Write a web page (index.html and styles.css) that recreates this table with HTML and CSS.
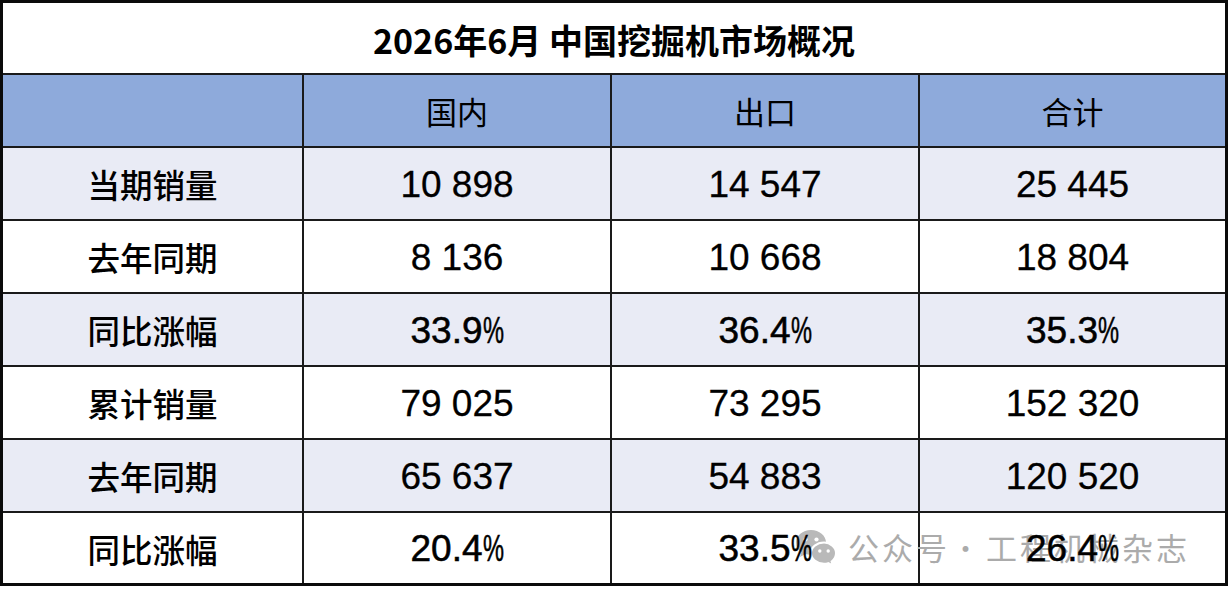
FILE: index.html
```html
<!DOCTYPE html>
<html lang="zh-CN">
<head>
<meta charset="utf-8">
<title>2026年6月 中国挖掘机市场概况</title>
<link rel="stylesheet" href="styles.css">
</head>
<body>
<div class="sheet">
  <div class="grid">
    <div class="cell title">2026年6月 中国挖掘机市场概况</div>

    <div class="cell head"></div>
    <div class="cell head">国内</div>
    <div class="cell head">出口</div>
    <div class="cell head">合计</div>

    <div class="cell label alt">当期销量</div>
    <div class="cell num alt"><span class="v">10 898</span></div>
    <div class="cell num alt"><span class="v">14 547</span></div>
    <div class="cell num alt"><span class="v">25 445</span></div>

    <div class="cell label">去年同期</div>
    <div class="cell num"><span class="v">8 136</span></div>
    <div class="cell num"><span class="v">10 668</span></div>
    <div class="cell num"><span class="v">18 804</span></div>

    <div class="cell label alt">同比涨幅</div>
    <div class="cell num alt"><span class="v p">33.9<span class="pct">%</span></span></div>
    <div class="cell num alt"><span class="v p">36.4<span class="pct">%</span></span></div>
    <div class="cell num alt"><span class="v p">35.3<span class="pct">%</span></span></div>

    <div class="cell label">累计销量</div>
    <div class="cell num"><span class="v">79 025</span></div>
    <div class="cell num"><span class="v">73 295</span></div>
    <div class="cell num"><span class="v">152 320</span></div>

    <div class="cell label alt">去年同期</div>
    <div class="cell num alt"><span class="v">65 637</span></div>
    <div class="cell num alt"><span class="v">54 883</span></div>
    <div class="cell num alt"><span class="v">120 520</span></div>

    <div class="cell label">同比涨幅</div>
    <div class="cell num"><span class="v p">20.4<span class="pct">%</span></span></div>
    <div class="cell num"><span class="v p">33.5<span class="pct">%</span></span></div>
    <div class="cell num"><span class="v p">26.4<span class="pct">%</span></span></div>
  </div>

  <div class="watermark">
    <svg class="wx" width="46" height="40" viewBox="0 0 46 40">
      <path d="M18 3C9.7 3 3 8.6 3 15.5c0 3.9 2.1 7.3 5.4 9.6L7 30l5.6-2.9c1.7.5 3.5.8 5.4.8 8.3 0 15-5.6 15-12.4S26.3 3 18 3z" fill="#b9b9b9"/>
      <circle cx="12.5" cy="12.5" r="2.1" fill="#fff"/>
      <circle cx="23.5" cy="12.5" r="2.1" fill="#fff"/>
      <path d="M31 15.5c-7.3 0-13 4.8-13 10.6s5.7 10.6 13 10.6c1.5 0 2.9-.2 4.2-.6l4.6 2.4-1.2-4c2.8-1.9 4.4-4.9 4.4-8.4 0-5.8-5.7-10.6-12-10.6z" fill="#b9b9b9" stroke="#fff" stroke-width="2"/>
      <circle cx="26.8" cy="24" r="1.7" fill="#fff"/>
      <circle cx="35.2" cy="24" r="1.7" fill="#fff"/>
    </svg>
    <span class="wm-text">公众号<span class="dot">·</span>工程机械杂志</span>
  </div>
</div>
</body>
</html>
```

FILE: styles.css
```css
html, body {
  margin: 0;
  padding: 0;
  background: #ffffff;
}

.sheet {
  position: relative;
  width: 1228px;
  height: 586px;
  box-sizing: border-box;
  border: 3px solid #0a0a0a;
  box-shadow: 0 1px 0 #c9c9c9;
}

.grid {
  display: grid;
  grid-template-columns: 299px 306px 306px 305px;
  grid-template-rows: 70px 71px 71px 71px 71px 71px 71px 70px;
  gap: 2px;
  background: #1a1a1a;
  height: 100%;
}

.cell {
  display: flex;
  align-items: center;
  justify-content: center;
  background: #ffffff;
  color: #000000;
  font-family: "Noto Sans CJK SC", "Noto Sans", sans-serif;
  font-size: 32.5px;
}

.title {
  grid-column: 1 / -1;
  font-size: 34px;
  font-weight: 700;
  padding-top: 2px;
}

.head {
  background: #8eaadb;
  font-size: 31px;
}

.alt {
  background: #e9ebf5;
}

.label {
  font-weight: 500;
}

.num {
  font-family: "Liberation Sans", Arial, sans-serif;
  font-size: 37px;
}

.v {
  position: relative;
  z-index: 2;
  padding-top: 2px;
  -webkit-text-stroke: 0.3px #000;
}

.p {
  -webkit-text-stroke: 0.55px #000;
}

.pct {
  display: inline-block;
  transform: scaleX(0.64);
  transform-origin: left center;
  margin-right: -12px;
}

.watermark {
  position: absolute;
  left: 790px;
  top: 521px;
  z-index: 1;
  display: flex;
  align-items: center;
  gap: 9px;
  pointer-events: none;
}

.wx {
  display: block;
}

.wm-text {
  font-family: "Noto Sans CJK SC", "Noto Sans", sans-serif;
  font-size: 31px;
  color: #ababab;
  letter-spacing: 3px;
  white-space: nowrap;
}

.dot {
  margin: 0 2px 0 0;
  font-weight: 300;
}
```
